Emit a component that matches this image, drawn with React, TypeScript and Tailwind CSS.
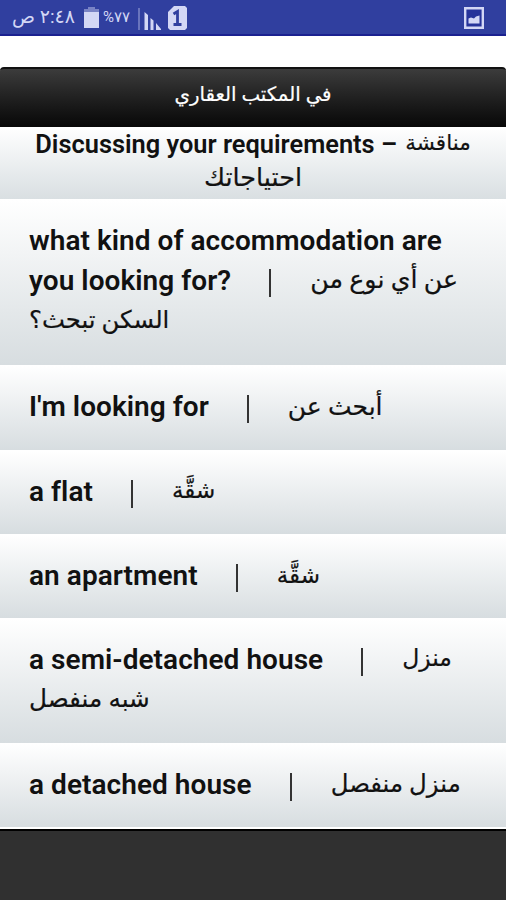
import React from 'react';

type Line = {
  en?: string;
  ar?: string;
  arClass?: string;
};

const rows: { height: string; lines: Line[] }[] = [
  {
    height: 'h-[166px]',
    lines: [
      { en: 'what kind of accommodation are' },
      { en: 'you looking for?', ar: 'عن أي نوع من', arClass: 'text-[25.3px]' },
      { ar: 'السكن تبحث؟', arClass: 'text-[24.3px]' },
    ],
  },
  { height: 'h-[84.5px]', lines: [{ en: "I'm looking for", ar: 'أبحث عن', arClass: 'text-[25px]' }] },
  { height: 'h-[84.5px]', lines: [{ en: 'a flat', ar: 'شقَّة', arClass: 'text-[23px]' }] },
  { height: 'h-[84px]', lines: [{ en: 'an apartment', ar: 'شقَّة', arClass: 'text-[23px]' }] },
  {
    height: 'h-[125px]',
    lines: [
      { en: 'a semi-detached house', ar: 'منزل', arClass: 'text-[23.5px]' },
      { ar: 'شبه منفصل', arClass: 'text-[24.7px]' },
    ],
  },
  { height: 'h-[84px]', lines: [{ en: 'a detached house', ar: 'منزل منفصل', arClass: 'text-[24.4px]' }] },
];

const StatusBar: React.FC = () => (
  <div className="flex h-[36px] items-center justify-between border-b-2 border-[#1b2190] bg-[#303f9f] pl-3 pr-[22px] text-[#d3d7f5]">
    <div className="flex h-full items-center">
      <span dir="rtl" className="w-[63px] -translate-y-px whitespace-nowrap text-[19px] leading-none">٢:٤٨ ص</span>
      <svg className="ml-[9px] h-[21px] w-[15px]" viewBox="0 0 15 21" fill="currentColor">
        <path d="M4 0h7v2h4v3H0V2h4z" opacity=".45" />
        <path d="M0 5h15v16H0z" />
      </svg>
      <span className="ml-[4px] w-[28px] whitespace-nowrap text-[15px] leading-none">%٧٧</span>
      <svg className="ml-[7px] mt-[3px] h-[22px] w-[24px]" viewBox="0 0 24 22" fill="currentColor">
        <path d="M0 0h2v22H0z" opacity=".35" />
        <path d="M6.5 4l3.5 3v15H6.5zM12.5 10l3 2.5V22h-3zM18 15l5 6v1h-5z" />
      </svg>
      <svg className="ml-[6px] mt-[2px] h-[24px] w-[19px]" viewBox="0 0 19 24">
        <path d="M6 0h11l2 2v20l-2 2H2l-2-2V6z" fill="currentColor" />
        <path d="M5.5 8l4-2.5V18M5.5 18.5h8" fill="none" stroke="#303f9f" strokeWidth="2.8" />
      </svg>
    </div>
    <svg className="mt-[2px] h-[22px] w-[20px]" viewBox="0 0 20 22">
      <path d="M1.2 1.2h17.6v19.6H1.2z" fill="#26339a" stroke="currentColor" strokeWidth="2.4" />
      <path d="M4.5 16.5v-5l2.5-1 3 1 2-2 3.5-1v8z" fill="currentColor" />
    </svg>
  </div>
);

const PhraseLine: React.FC<{ line: Line }> = ({ line }) => (
  <div className="flex h-[40px] items-center whitespace-nowrap">
    {line.en && <span className="font-semibold tracking-[0.05px]">{line.en}</span>}
    {line.en && line.ar && <span className="ml-[38px] mr-[39px] h-[28px] w-[2px] translate-y-[2px] bg-[#333]" />}
    {line.ar && (
      <span dir="rtl" className={`-translate-y-px [-webkit-text-stroke:0.2px] ${line.arClass}`}>{line.ar}</span>
    )}
  </div>
);

const App: React.FC = () => {
  return (
    <div className="flex h-[900px] w-[506px] flex-col overflow-hidden bg-[#303030] font-['Roboto','DejaVu_Sans',sans-serif] text-[#111]">
      <StatusBar />

      <div className="bg-white pt-[31px]">
        <header className="flex h-[60px] items-center justify-center rounded-t border-t-2 border-[#111] bg-gradient-to-b from-[#3c3c3c] to-[#080808] pb-1.5 text-white">
          <h1 dir="rtl" className="text-[19.8px] [-webkit-text-stroke:0.2px]">في المكتب العقاري</h1>
        </header>
      </div>

      <section className="flex h-[72px] flex-col items-center bg-gradient-to-b from-white to-[#d9dfe2] font-semibold whitespace-nowrap">
        <div className="flex h-[34px] items-center gap-2">
          <span className="text-[25.4px]">Discussing your requirements –</span>
          <span dir="rtl" className="-translate-y-px text-[21.5px] font-normal [-webkit-text-stroke:0.2px]">مناقشة</span>
        </div>
        <div dir="rtl" className="flex h-[33px] items-center text-[25.5px] font-normal [-webkit-text-stroke:0.2px]">احتياجاتك</div>
      </section>

      <ul className="border-b-2 border-white">
        {rows.map((row, index) => (
          <li
            key={index}
            className={`${row.height} border-t border-white bg-gradient-to-b from-white to-[#d7dde0] pl-[29px] pt-[21px] text-[28px] leading-none`}
          >
            {row.lines.map((line, i) => (
              <PhraseLine key={i} line={line} />
            ))}
          </li>
        ))}
      </ul>

      <footer className="flex-1 border-t-2 border-black bg-[#303030]" />
    </div>
  );
};

export default App;
